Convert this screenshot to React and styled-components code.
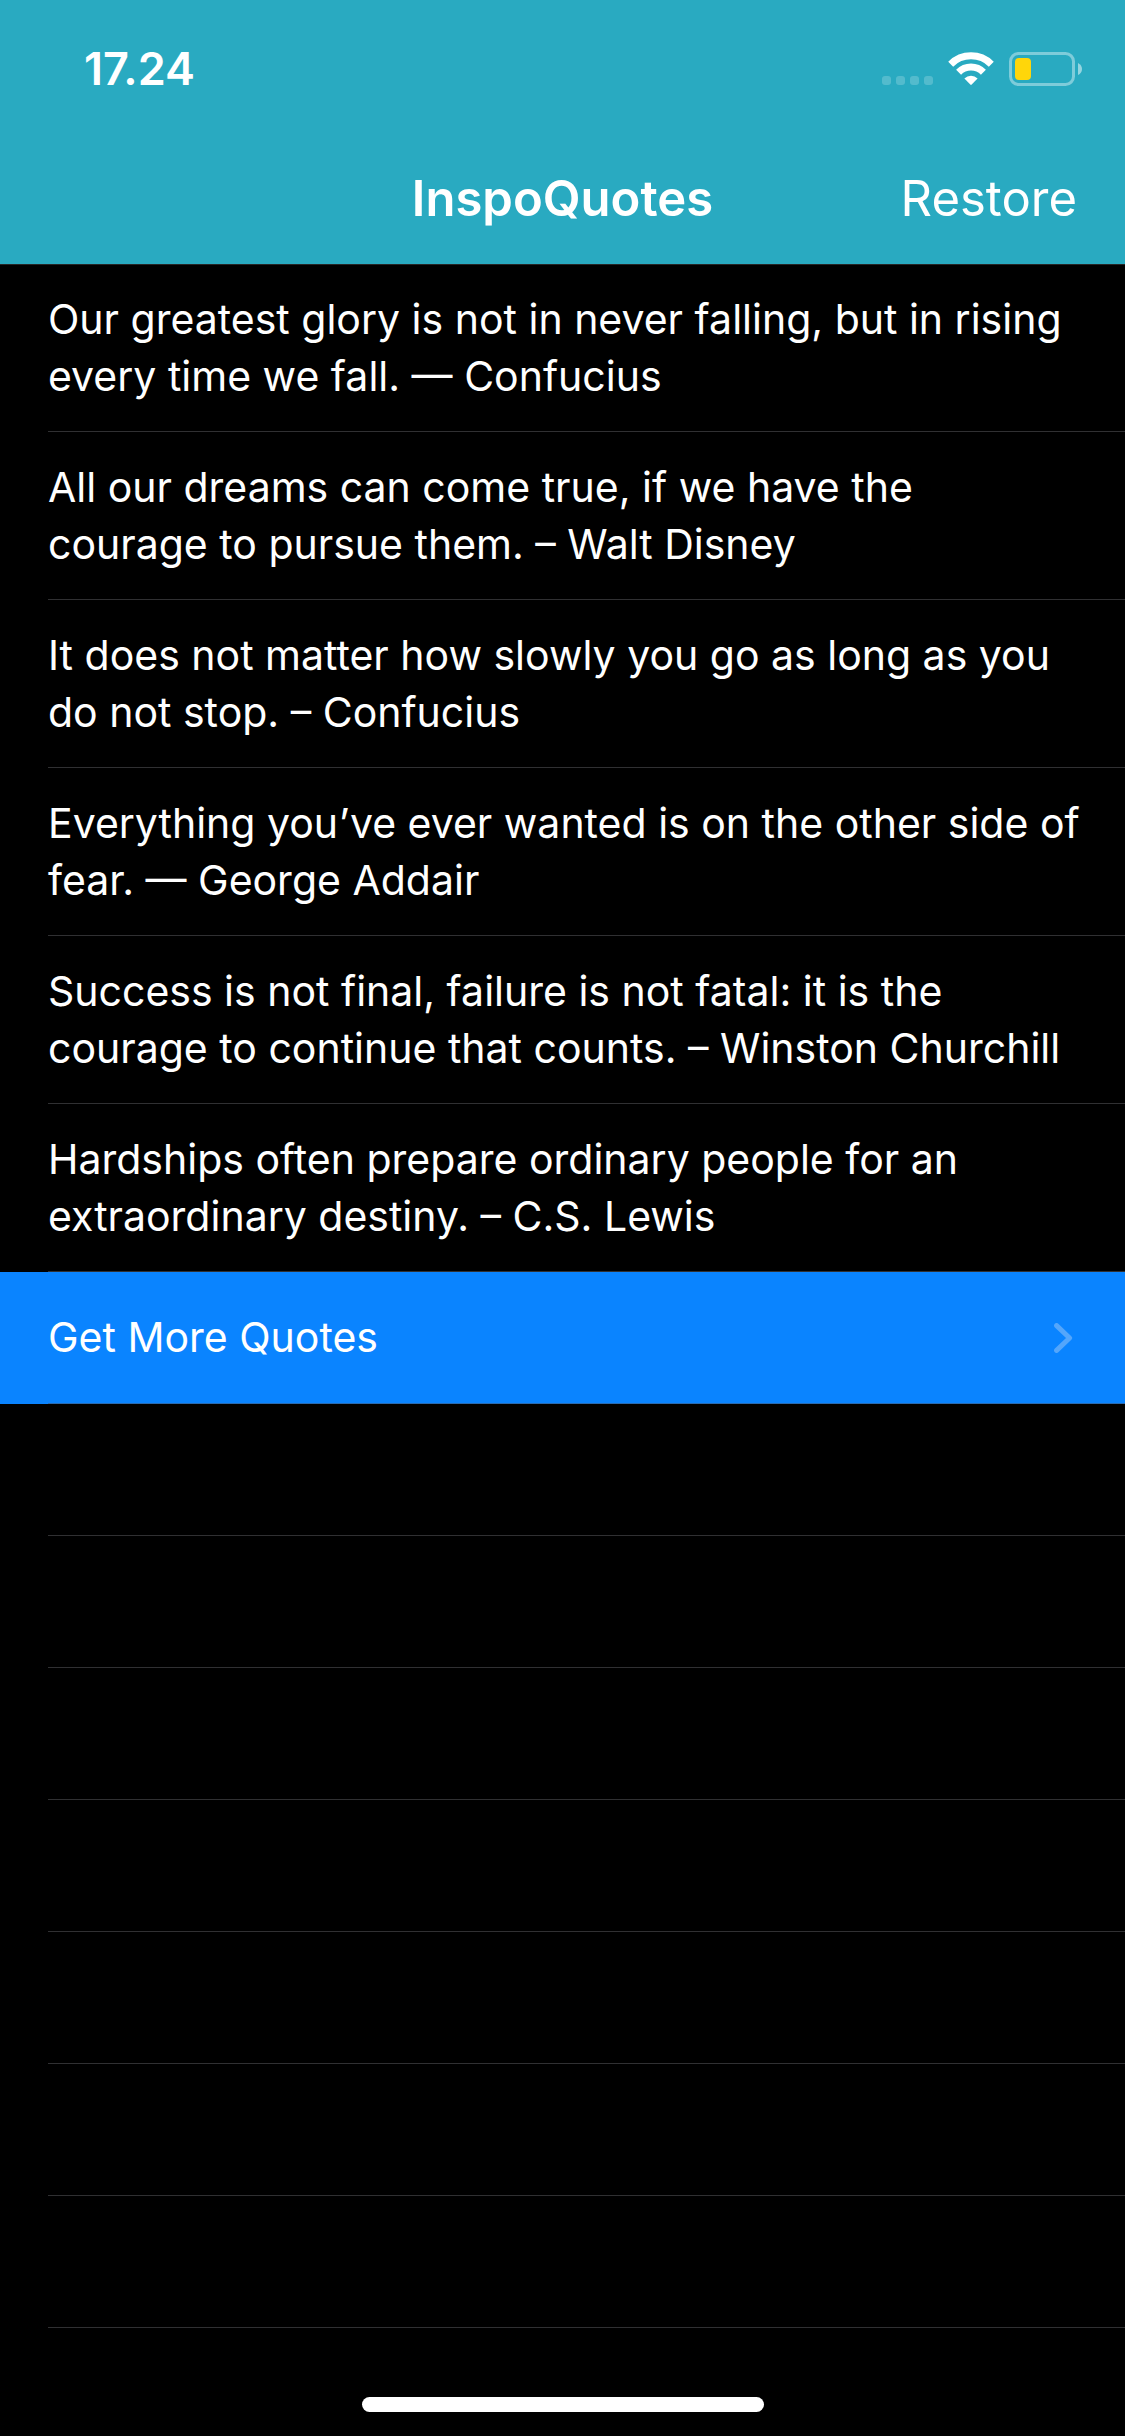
import React from "react";
import styled, { createGlobalStyle } from "styled-components";

const GlobalStyle = createGlobalStyle`
  * { box-sizing: border-box; }
  body {
    margin: 0;
    background: #000;
    color: #fff;
    font-family: Inter, "Liberation Sans", sans-serif;
  }
`;

const Screen = styled.div`
  display: flex;
  flex-direction: column;
  min-height: 100vh;
`;

const Header = styled.header`
  background: #29aac1;
`;

const StatusBar = styled.div`
  display: flex;
  align-items: center;
  justify-content: space-between;
  height: 132px;
  padding: 6px 42px 0 84px;
`;

const Time = styled.time`
  font-size: 45px;
  font-weight: 600;
  line-height: 54px;
`;

const StatusIcons = styled.div`
  display: flex;
  align-items: center;
  gap: 15px;
`;

const NavBar = styled.nav`
  display: grid;
  grid-template-columns: 1fr auto 1fr;
  align-items: center;
  height: 132px;
  padding: 2px 48px 0;
`;

const Title = styled.h1`
  grid-column: 2;
  margin: 0;
  font-size: 49px;
  font-weight: 600;
  line-height: 60px;
`;

const NavButton = styled.button`
  justify-self: end;
  padding: 0;
  border: 0;
  background: none;
  color: inherit;
  font: inherit;
  font-size: 49px;
  line-height: 60px;
  cursor: pointer;
`;

const List = styled.ul`
  margin: 0;
  padding: 0;
  list-style: none;
  box-shadow: inset 0 1px #262626;
`;

const Row = styled.li`
  min-height: 132px;
  padding-left: 48px;
  background: ${(p) => (p.$filled ? "#0a84ff" : "transparent")};
`;

const RowBody = styled.div`
  min-height: 132px;
  padding: 27px 44px 26px 0;
  border-bottom: 1px solid #303032;
  font-size: 41px;
  line-height: 57px;
`;

const RowButton = styled.button`
  display: flex;
  align-items: center;
  justify-content: space-between;
  width: 100%;
  min-height: 132px;
  padding: 0 52px 0 0;
  border: 0;
  border-bottom: 1px solid #2a6bb0;
  background: none;
  color: inherit;
  font: inherit;
  font-size: 41px;
  line-height: 57px;
  text-align: left;
  cursor: pointer;
`;

const Footer = styled.footer`
  display: flex;
  justify-content: center;
  margin-top: auto;
  padding: 24px 0;
`;

const HomeIndicator = styled.div`
  width: 402px;
  height: 15px;
  border-radius: 8px;
  background: #fff;
`;

const quotes = [
  "Our greatest glory is not in never falling, but in rising every time we fall. — Confucius",
  "All our dreams can come true, if we have the courage to pursue them. – Walt Disney",
  "It does not matter how slowly you go as long as you do not stop. – Confucius",
  "Everything you’ve ever wanted is on the other side of fear. — George Addair",
  "Success is not final, failure is not fatal: it is the courage to continue that counts. – Winston Churchill",
  "Hardships often prepare ordinary people for an extraordinary destiny. – C.S. Lewis",
];

const emptyRows = [0, 1, 2, 3, 4, 5, 6];

function SignalIcon() {
  return (
    <svg width="51" height="34" viewBox="0 0 51 34" fill="#fff" fillOpacity="0.2" aria-hidden="true">
      {[0, 14, 28, 42].map((x) => (
        <rect key={x} x={x} y="24" width="9" height="9" rx="3" />
      ))}
    </svg>
  );
}

function WifiIcon() {
  return (
    <svg width="46" height="34" viewBox="0 0 46 34" aria-hidden="true">
      <g fill="none" stroke="#fff" strokeWidth="7">
        <path d="M2.7 12.2A28.8 28.8 0 0 1 43.3 12.2" />
        <path d="M10.6 20.2A17.5 17.5 0 0 1 35.4 20.2" />
      </g>
      <path fill="#fff" d="M16.4 26.4A9.6 9.6 0 0 1 29.6 26.4L23.7 32.6Q23 33.3 22.3 32.6Z" />
    </svg>
  );
}

function BatteryIcon() {
  return (
    <svg width="74" height="34" viewBox="0 0 74 34" aria-hidden="true">
      <rect x="1.5" y="1.5" width="63" height="31" rx="8" fill="none" stroke="#fff" strokeOpacity="0.4" strokeWidth="3" />
      <rect x="6" y="6" width="16" height="22" rx="4" fill="#ffd60a" />
      <path d="M69 11Q73 13 73 17T69 23Z" fill="#fff" fillOpacity="0.5" />
    </svg>
  );
}

function Chevron() {
  return (
    <svg width="19" height="30" viewBox="0 0 19 30" aria-hidden="true">
      <path
        d="M2.6 2.6L15.6 15L2.6 27.4"
        fill="none"
        stroke="#54a6fb"
        strokeWidth="5"
        strokeLinecap="round"
        strokeLinejoin="round"
      />
    </svg>
  );
}

export default function App() {
  return (
    <Screen>
      <GlobalStyle />
      <Header>
        <StatusBar>
          <Time>17.24</Time>
          <StatusIcons>
            <SignalIcon />
            <WifiIcon />
            <BatteryIcon />
          </StatusIcons>
        </StatusBar>
        <NavBar>
          <Title>InspoQuotes</Title>
          <NavButton type="button">Restore</NavButton>
        </NavBar>
      </Header>
      <List>
        {quotes.map((quote) => (
          <Row key={quote}>
            <RowBody>{quote}</RowBody>
          </Row>
        ))}
        <Row $filled>
          <RowButton type="button">
            Get More Quotes
            <Chevron />
          </RowButton>
        </Row>
        {emptyRows.map((n) => (
          <Row key={n} aria-hidden="true">
            <RowBody />
          </Row>
        ))}
      </List>
      <Footer>
        <HomeIndicator />
      </Footer>
    </Screen>
  );
}
